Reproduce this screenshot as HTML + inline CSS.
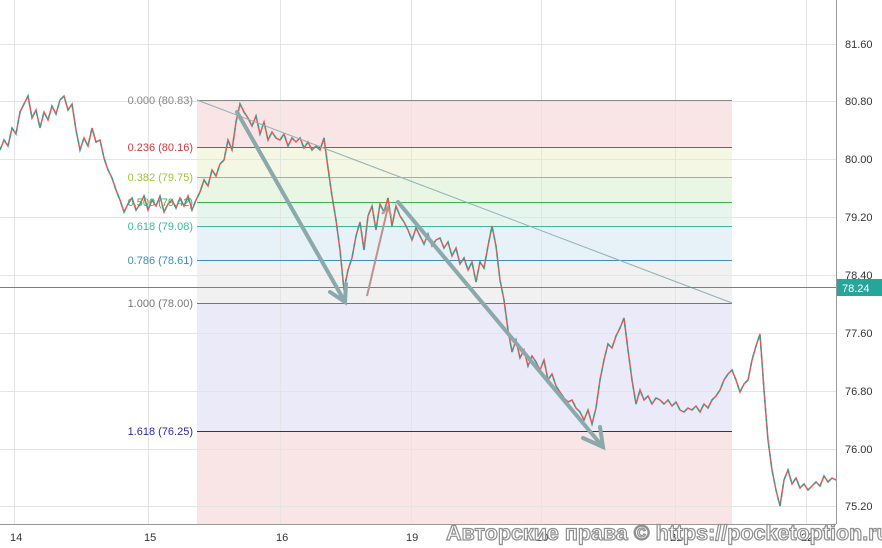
<!DOCTYPE html>
<html><head><meta charset="utf-8"><style>
html,body{margin:0;padding:0;background:#fff;width:882px;height:548px;overflow:hidden;font-family:"Liberation Sans",sans-serif}
svg{position:absolute;left:0;top:0}
.wm{position:absolute;left:446px;top:521px;font:bold 21.5px "Liberation Sans","DejaVu Sans",sans-serif;color:#fff;-webkit-text-stroke:1.2px #8f8f8f;white-space:nowrap;letter-spacing:0px}
</style></head><body>
<svg width="882" height="548" xmlns="http://www.w3.org/2000/svg" font-family="Liberation Sans, sans-serif">
<defs>
<path id="p1" d="M0 150 L4 140 8 146 12 128 16 134 20 112 24 104 28 96 32 118 36 110 40 128 44 112 48 120 52 106 56 114 60 100 64 96 68 110 72 104 76 130 80 150 84 138 88 146 92 128 96 142 100 140 104 158 108 170 112 178 116 190 120 200 124 212 128 204 132 198 136 210 140 204 144 196 148 210 152 200 156 206 160 196 164 212 168 204 172 200 176 208 180 198 184 206 188 196 192 210 196 200 200 192 204 180 208 186 212 170 216 176 220 164 224 160 228 140 232 150 236 122 240 104 244 112 248 118 252 126 256 116 260 134 264 122 268 140 272 132 276 138 280 140 284 134 288 146 292 138 296 142 300 138 304 148 308 142 312 150 316 146 320 150 324 138 328 168 332 196 336 220 340 250 344 290 348 270 352 258 356 236 360 222 364 250 368 216 372 206 376 230 380 204 384 212 388 198 392 226 396 206 400 216 404 222 408 230 412 240 416 228 420 236 424 244 428 234 432 246 436 240 440 238 444 248 448 242 452 256 456 248 460 264 464 258 468 270 472 262 476 282 480 262 484 268 488 246 492 226 496 246 500 280 504 300 508 330 512 352 516 340 520 358 524 350 528 366 532 356 536 362 540 370 544 360 548 380 552 374 556 386 560 392 564 398 568 402 572 400 576 408 580 412 584 420 588 410 592 424 596 408 600 380 604 360 608 344 612 348 616 336 620 328 624 318 628 350 632 380 636 404 640 390 644 400 648 396 652 404 656 398 660 400 664 404 668 400 672 406 676 402 680 410 684 412 688 408 692 410 696 406 700 412 704 404 708 408 712 400 716 396 720 390 724 380 728 374 732 370 736 380 740 392 744 384 748 380 752 360 756 346 760 334 764 390 768 440 772 470 776 490 780 506 784 480 788 470 792 484 796 478 800 488 804 484 808 490 812 486 816 482 820 486 824 476 828 482 832 478 836 480"/>
</defs>
<rect x="197" y="100" width="535" height="47" fill="#f9e5e5"/>
<rect x="197" y="147" width="535" height="30" fill="#f3f7e3"/>
<rect x="197" y="177" width="535" height="25" fill="#e9f6e3"/>
<rect x="197" y="202" width="535" height="24" fill="#e6f5ee"/>
<rect x="197" y="226" width="535" height="34" fill="#e6f2f7"/>
<rect x="197" y="260" width="535" height="43" fill="#f1f1f1"/>
<rect x="197" y="303" width="535" height="128" fill="#ebeaf8"/>
<rect x="197" y="431" width="535" height="93" fill="#f9e5e5"/>
<g stroke="#e4e4e4" stroke-width="1">
<line x1="14.5" y1="0" x2="14.5" y2="524"/><line x1="148.5" y1="0" x2="148.5" y2="524"/><line x1="280.5" y1="0" x2="280.5" y2="524"/><line x1="411.5" y1="0" x2="411.5" y2="524"/><line x1="541.5" y1="0" x2="541.5" y2="524"/><line x1="675.5" y1="0" x2="675.5" y2="524"/><line x1="806.5" y1="0" x2="806.5" y2="524"/>
<line x1="0" y1="44.5" x2="836" y2="44.5"/><line x1="0" y1="101.5" x2="836" y2="101.5"/><line x1="0" y1="159.5" x2="836" y2="159.5"/><line x1="0" y1="217.5" x2="836" y2="217.5"/><line x1="0" y1="275.5" x2="836" y2="275.5"/><line x1="0" y1="333.5" x2="836" y2="333.5"/><line x1="0" y1="391.5" x2="836" y2="391.5"/><line x1="0" y1="449.5" x2="836" y2="449.5"/><line x1="0" y1="506.5" x2="836" y2="506.5"/>
</g>
<g stroke-width="1">
<line x1="197" y1="100.5" x2="732" y2="100.5" stroke="#888"/>
<line x1="197" y1="147.5" x2="732" y2="147.5" stroke="#d03a3a"/>
<line x1="197" y1="177.5" x2="732" y2="177.5" stroke="#9cc63a"/>
<line x1="197" y1="202.5" x2="732" y2="202.5" stroke="#3cb44a"/>
<line x1="197" y1="226.5" x2="732" y2="226.5" stroke="#3cb89a"/>
<line x1="197" y1="260.5" x2="732" y2="260.5" stroke="#3a8fc0"/>
<line x1="197" y1="303.5" x2="732" y2="303.5" stroke="#777"/>
<line x1="197" y1="431.5" x2="732" y2="431.5" stroke="#2a2aa0"/>
</g>
<g font-size="11" text-anchor="end">
<text x="193" y="104" fill="#888">0.000 (80.83)</text>
<text x="193" y="151" fill="#d03a3a">0.236 (80.16)</text>
<text x="193" y="181" fill="#9cc63a">0.382 (79.75)</text>
<text x="193" y="206" fill="#3cb44a">0.500 (79.42)</text>
<text x="193" y="230" fill="#3cb89a">0.618 (79.08)</text>
<text x="193" y="264" fill="#3a8fc0">0.786 (78.61)</text>
<text x="193" y="307" fill="#777">1.000 (78.00)</text>
<text x="193" y="435" fill="#2a2aa0">1.618 (76.25)</text>
</g>
<g fill="none" stroke-width="1.5">
<use href="#p1" xlink:href="#p1" xmlns:xlink="http://www.w3.org/1999/xlink" stroke="#ef5350"/>
<use href="#p1" xlink:href="#p1" xmlns:xlink="http://www.w3.org/1999/xlink" stroke="#26a69a" stroke-dasharray="4 5"/>
</g>
<line x1="197" y1="100" x2="732" y2="303" stroke="#8fb0b4" stroke-width="1"/>
<line x1="0" y1="287.5" x2="836" y2="287.5" stroke="#26a69a" stroke-width="1"/>
<g stroke="#8aa9ab" stroke-width="4" stroke-linecap="round" fill="none">
<path d="M237 112 L345 302 M330 292 L345 302 L346 284"/>
<path d="M398 202 L603 447 M583 438 L603 447 L600 427"/>
</g>
<path d="M367 296 L388 207 M382 214 L388 207 L391 216" stroke="#c09090" stroke-width="2" fill="none"/>
<line x1="836.5" y1="0" x2="836.5" y2="524" stroke="#999"/>
<line x1="0" y1="524.5" x2="836" y2="524.5" stroke="#999"/>
<g font-size="11" fill="#333">
<text x="845" y="48">81.60</text><text x="845" y="105">80.80</text><text x="845" y="163">80.00</text><text x="845" y="221">79.20</text><text x="845" y="279">78.40</text><text x="845" y="337">77.60</text><text x="845" y="395">76.80</text><text x="845" y="453">76.00</text><text x="845" y="510">75.20</text>
<text x="10" y="541">14</text><text x="144" y="541">15</text><text x="276" y="541">16</text><text x="406" y="541">19</text><text x="536" y="541">20</text><text x="670" y="541">21</text><text x="801" y="541">22</text>
</g>
<rect x="837" y="279" width="45" height="17" fill="#26a69a"/>
<text x="842" y="292" font-size="11" fill="#fff">78.24</text>
</svg>
<div class="wm">Авторские права © https://pocketoption.ru</div>
</body></html>
